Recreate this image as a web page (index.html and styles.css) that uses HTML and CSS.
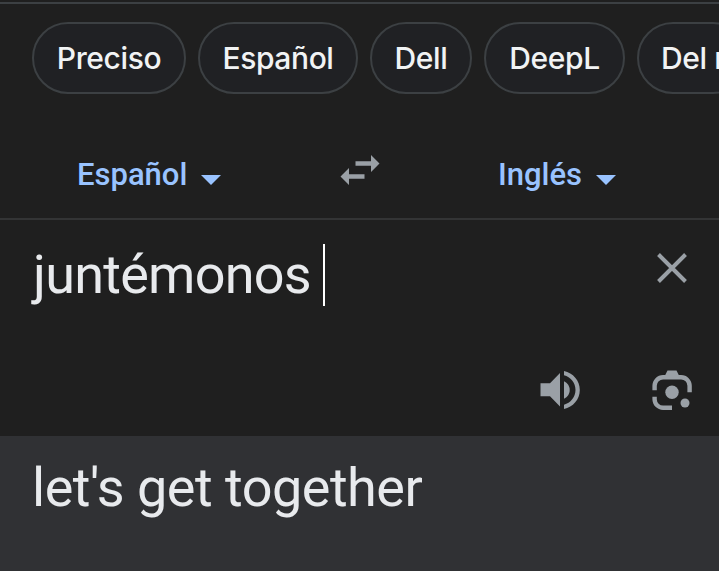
FILE: index.html
```
<!DOCTYPE html>
<html lang="es">

<head>
    <meta charset="UTF-8">
    <meta name="viewport" content="width=device-width, initial-scale=1.0">
    <title>Traductor</title>
    <link rel="stylesheet" href="styles.css">
</head>

<body>
    <nav class="chips">
        <a class="chip chip-preciso">Preciso</a>
        <a class="chip chip-espanol">Español</a>
        <a class="chip chip-dell">Dell</a>
        <a class="chip chip-deepl">DeepL</a>
        <a class="chip chip-last">Del r</a>
    </nav>

    <div class="languages">
        <div class="language">
            <span class="language-name">Español</span>
            <svg class="caret" viewBox="0 0 20 10"><path d="M0 0h20L10 10z" /></svg>
        </div>
        <svg class="swap" viewBox="0 0 40 30"><path d="M15.5 6.3H31V0l8.5 8.4L31 17v-6.3H15.5zM24.5 19.2H9V13L.5 21.400 9 30v-6.300h15.500z" /></svg>
        <div class="language">
            <span class="language-name">Inglés</span>
            <svg class="caret" viewBox="0 0 20 10"><path d="M0 0h20L10 10z" /></svg>
        </div>
    </div>

    <main class="source">
        <div class="source-row">
            <div class="source-text"><span class="phrase">juntémonos</span><span class="cursor"></span></div>
            <svg class="close" viewBox="0 0 32 32"><path d="M2.5 2.5l27 27M29.5 2.5l-27 27" /></svg>
        </div>
        <div class="actions">
            <svg class="icon" viewBox="0 0 40 40">
                <path d="M.5 13.300v13H10L20 36.500V3L10 13.300z" />
                <path d="M24 11.300c3.500 1.500 5.700 4.800 5.700 8.700s-2.200 7.200-5.700 8.700z" />
                <path d="M24 1c9 1.800 15.800 9.600 15.800 19S33 37.200 24 39v-4.300c6.500-1.800 11.500-7.500 11.500-14.700S30.500 7.100 24 5.300z" />
            </svg>
            <svg class="icon" viewBox="0 0 40 40">
                <path class="outline" d="M2.600 20.200v-4.400a8.500 8.500 0 0 1 8.500-8.500h18a8.500 8.500 0 0 1 8.500 8.500v6.500M2.600 26.700v2.500a8.500 8.500 0 0 0 8.500 8.500h8.900" />
                <path d="M12.500 6.500L15.500.5h9l3 6z" />
                <circle cx="20" cy="22.200" r="6.700" />
                <circle cx="33" cy="33" r="4.500" />
            </svg>
        </div>
    </main>

    <section class="result">
        <span class="translation">let's get together</span>
    </section>
</body>

</html>
```

FILE: styles.css
```
body {
    margin: 0;
    height: 571px;
    overflow: hidden;
    display: flex;
    flex-direction: column;
    background-color: #1f1f1f;
    color: #e8eaed;
    font-family: Roboto, Arial, sans-serif;
}

svg {
    display: block;
    flex: none;
    fill: #9aa0a6;
}

.chips {
    display: flex;
    gap: 12px;
    box-sizing: border-box;
    height: 114px;
    margin-top: 2px;
    padding: 18px 0 0 32px;
    border-top: 2px solid #3c4043;
    overflow: hidden;
}

.chip {
    flex: none;
    box-sizing: border-box;
    height: 72px;
    border: 2px solid #3c4043;
    border-radius: 36px;
    background-color: #202124;
    color: #f1f3f4;
    font-family: Inter, sans-serif;
    font-size: 30px;
    font-weight: 550;
    line-height: 68px;
    letter-spacing: -0.4px;
    text-align: center;
    white-space: nowrap;
}

.chip-preciso {
    width: 154px;
}

.chip-espanol {
    width: 160px;
}

.chip-dell {
    width: 102px;
}

.chip-deepl {
    width: 141px;
}

.chip-last {
    padding: 0 22px;
}

.languages {
    display: flex;
    justify-content: space-between;
    box-sizing: border-box;
    height: 104px;
    padding: 39px 103px 0 77px;
    border-bottom: 2px solid #333435;
}

.language {
    display: flex;
    gap: 14px;
}

.language-name {
    color: #99c3ff;
    font-size: 31px;
    font-weight: 500;
    line-height: 40px;
}

.caret {
    width: 20px;
    height: 10px;
    margin-top: 20px;
    fill: #99c3ff;
}

.swap {
    width: 40px;
    height: 30px;
}

.source {
    display: flex;
    flex-direction: column;
    justify-content: space-between;
    box-sizing: border-box;
    height: 216px;
    padding: 24px 27px 26px 33px;
}

.source-row {
    display: flex;
    justify-content: space-between;
}

.source-text {
    display: flex;
    gap: 12px;
}

.phrase,
.translation {
    font-size: 54px;
    line-height: 62px;
    white-space: nowrap;
}

.phrase {
    letter-spacing: -0.75px;
}

.translation {
    letter-spacing: -0.5px;
}

.cursor {
    width: 2px;
    height: 62px;
    background-color: #fff;
}

.close {
    width: 32px;
    height: 32px;
    margin: 8px 4px 0 0;
    fill: none;
    stroke: #9aa0a6;
    stroke-width: 4;
}

.actions {
    display: flex;
    justify-content: flex-end;
    gap: 72px;
}

.icon {
    width: 40px;
    height: 40px;
}

.outline {
    fill: none;
    stroke: #9aa0a6;
    stroke-width: 4.4;
}

.result {
    flex: 1;
    padding: 21px 32px;
    background-color: #303134;
}
```
